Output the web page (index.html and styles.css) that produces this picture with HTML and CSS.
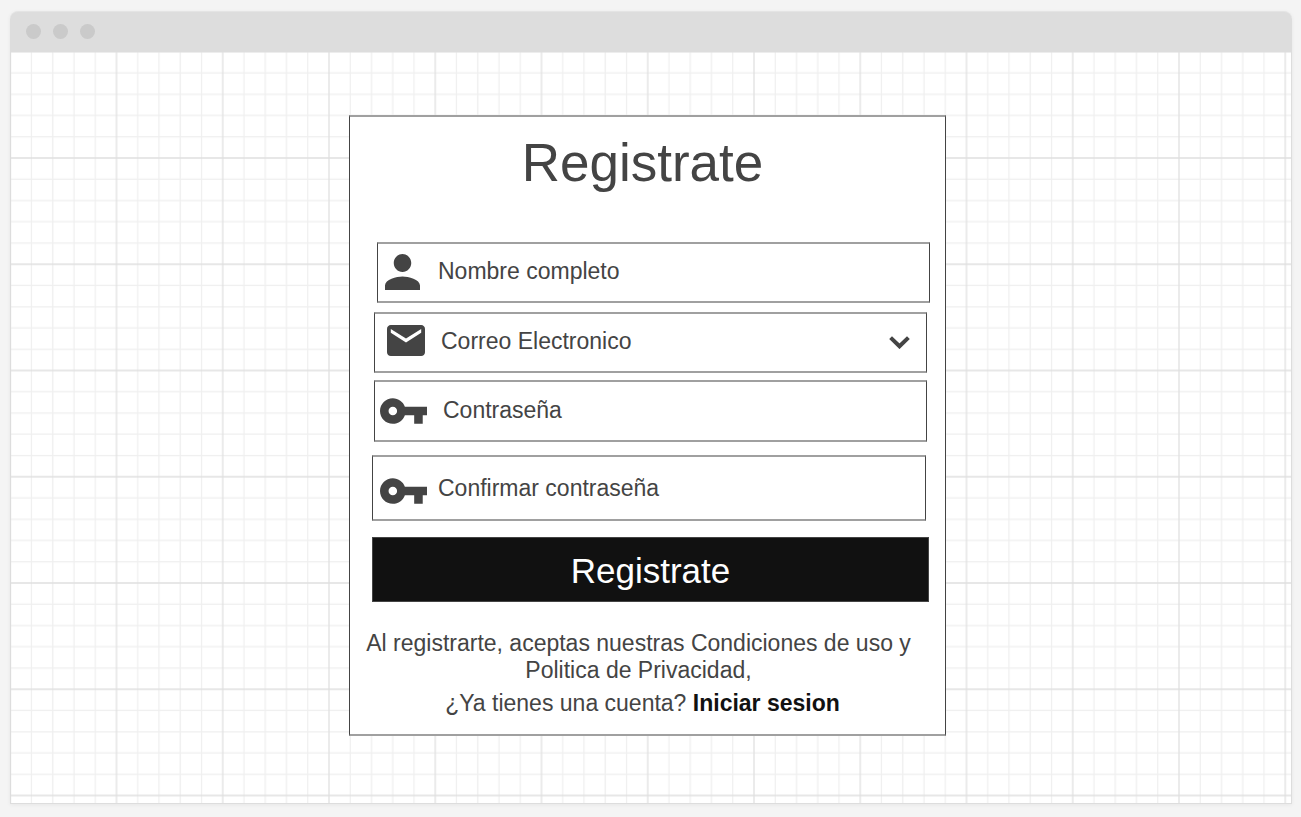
FILE: index.html
```html
<!DOCTYPE html>
<html lang="es">
<head>
<meta charset="utf-8">
<meta name="viewport" content="width=device-width, initial-scale=1">
<title>Registrate</title>
<link rel="stylesheet" href="styles.css">
</head>
<body>
<div class="window">
  <header class="titlebar">
    <span class="dot"></span>
    <span class="dot"></span>
    <span class="dot"></span>
  </header>
  <main class="canvas">
    <svg class="grid" aria-hidden="true">
      <defs>
        <pattern id="grid" width="425" height="425" patternUnits="userSpaceOnUse" patternTransform="translate(-0.75 -0.25) scale(0.25)">
          <path d="M85 0V425M170 0V425M255 0V425M340 0V425M0 85H425M0 170H425M0 255H425M0 340H425" stroke="#efefef" stroke-width="5"/>
          <path d="M0 0V425M425 0V425M0 0H425M0 425H425" stroke="#e0e0e0" stroke-width="5"/>
        </pattern>
      </defs>
      <rect width="100%" height="100%" fill="url(#grid)"/>
    </svg>
    <section class="card">
      <h1 class="title">Registrate</h1>
      <form class="form">
        <div class="field field-name">
          <label class="field-icon" for="name">
            <svg width="35" height="36" viewBox="4 4 16 16" preserveAspectRatio="none" aria-hidden="true"><path d="M12 12c2.21 0 4-1.79 4-4s-1.79-4-4-4-4 1.79-4 4 1.79 4 4 4zm0 2c-2.67 0-8 1.34-8 4v2h16v-2c0-2.66-5.33-4-8-4z"/></svg>
          </label>
          <input class="control" id="name" type="text" placeholder="Nombre completo" aria-label="Nombre completo">
        </div>
        <div class="field field-email">
          <label class="field-icon" for="email">
            <svg width="38" height="31" viewBox="2 4 20 16" preserveAspectRatio="none" aria-hidden="true"><path d="M20 4H4c-1.1 0-2 .9-2 2v12c0 1.1.9 2 2 2h16c1.1 0 2-.9 2-2V6c0-1.1-.9-2-2-2zm0 4l-8 5-8-5V6l8 5 8-5v2z"/></svg>
          </label>
          <select class="control" id="email" aria-label="Correo Electronico">
            <option>Correo Electronico</option>
          </select>
          <svg class="chevron" width="21" height="13" viewBox="0 0 21 13" aria-hidden="true"><path d="M1.6 1.6L10.5 10.3L19.4 1.6"/></svg>
        </div>
        <div class="field field-password">
          <label class="field-icon" for="password">
            <svg width="47" height="26" viewBox="1 6 22 12" aria-hidden="true"><path d="M12.65 10C11.83 7.67 9.61 6 7 6c-3.31 0-6 2.69-6 6s2.69 6 6 6c2.61 0 4.83-1.67 5.65-4H17v4h4v-4h2v-4H12.65zM7 14c-1.1 0-2-.9-2-2s.9-2 2-2 2 .9 2 2-.9 2-2 2z"/></svg>
          </label>
          <input class="control" id="password" type="password" placeholder="Contraseña" aria-label="Contraseña">
        </div>
        <div class="field field-confirm">
          <label class="field-icon" for="confirm">
            <svg width="47" height="26" viewBox="1 6 22 12" aria-hidden="true"><path d="M12.65 10C11.83 7.67 9.61 6 7 6c-3.31 0-6 2.69-6 6s2.69 6 6 6c2.61 0 4.83-1.67 5.65-4H17v4h4v-4h2v-4H12.65zM7 14c-1.1 0-2-.9-2-2s.9-2 2-2 2 .9 2 2-.9 2-2 2z"/></svg>
          </label>
          <input class="control" id="confirm" type="password" placeholder="Confirmar contraseña" aria-label="Confirmar contraseña">
        </div>
        <button class="submit" type="submit">Registrate</button>
      </form>
      <p class="terms">Al registrarte, aceptas nuestras Condiciones de uso y Politica de Privacidad,</p>
      <p class="login">¿Ya tienes una cuenta? <a class="login-link" href="#">Iniciar sesion</a></p>
    </section>
  </main>
</div>
</body>
</html>
```
FILE: styles.css
```css
* {
  box-sizing: border-box;
}

body {
  display: flex;
  min-height: 100vh;
  margin: 0;
  padding: 11px 9px 13px 10px;
  background: #f4f4f4;
  color: #444;
  font-family: "Liberation Sans", Arial, sans-serif;
  font-size: 23px;
  line-height: 27px;
}

.window {
  display: flex;
  flex: 1;
  flex-direction: column;
  min-width: 0;
  border-radius: 8px 8px 0 0;
  box-shadow: 0 1px 4px rgba(0, 0, 0, 0.06);
}

.titlebar {
  display: flex;
  align-items: center;
  gap: 12px;
  height: 41px;
  padding: 0 16px 2px;
  border-top: 1px solid #e4e4e4;
  border-radius: 8px 8px 0 0;
  background: #ddd;
}

.dot {
  width: 15px;
  height: 15px;
  border-radius: 50%;
  background: #cacaca;
}

.canvas {
  position: relative;
  display: flex;
  flex: 1;
  align-items: flex-start;
  justify-content: center;
  padding: 63px 7px 67px 0;
  border: 1px solid #ddd;
  border-top: 0;
  background: #fff;
}

.grid {
  position: absolute;
  inset: 0;
  width: 100%;
  height: 100%;
}

.card {
  position: relative;
  width: 100%;
  max-width: 597px;
  padding: 16px 0 17px;
  border: 1px solid #444;
  border-width: 2px 1px;
  border-color: #a0a0a0 #444;
  background: #fff;
}

.title {
  margin: 0;
  padding-right: 10px;
  font-size: 53px;
  font-weight: 400;
  line-height: 60px;
  text-align: center;
}

.form {
  display: flex;
  flex-direction: column;
  margin-top: 49px;
  padding: 0 15px 0 22px;
}

.field {
  display: flex;
  align-items: stretch;
  height: 61px;
  border: 1px solid #444;
  border-width: 2px 1px;
  border-color: #a0a0a0 #444;
}

.field-icon {
  display: flex;
  flex: none;
  align-items: center;
  fill: #444;
}

.control {
  flex: 1;
  min-width: 0;
  margin: 0;
  padding: 0 0 2px;
  border: 0;
  outline: 0;
  background: transparent;
  color: #444;
  font: inherit;
  appearance: none;
}

.control::placeholder {
  color: #444;
  opacity: 1;
}

.field-name {
  margin-left: 5px;
}

.field-name .field-icon {
  width: 60px;
  padding: 0 0 2px 7px;
}

.field-email {
  align-items: center;
  margin: 9px 3px 0 2px;
}

.field-email .field-icon {
  width: 66px;
  padding: 0 0 4px 12px;
}

.field-email .control {
  height: 100%;
}

.chevron {
  flex: none;
  margin-right: 16px;
  fill: none;
  stroke: #444;
  stroke-width: 4;
  pointer-events: none;
}

.field-password {
  height: 62px;
  margin: 7px 3px 0 2px;
}

.field-password .field-icon {
  width: 68px;
  padding-left: 5px;
}

.field-confirm {
  height: 66px;
  margin: 13px 4px 0 0;
}

.field-confirm .field-icon {
  width: 65px;
  padding: 6px 0 0 7px;
}

.field-confirm .control {
  padding: 0;
}

.submit {
  height: 65px;
  margin: 16px 1px 0 0;
  padding: 2px 0 0;
  border: 1px solid #444;
  background: #111;
  color: #fff;
  font: inherit;
  font-size: 35px;
}

.terms {
  margin: 28px 0 0;
  padding: 0 22px 0 4px;
  text-align: center;
}

.login {
  margin: 6px 0 0;
  padding-right: 10px;
  text-align: center;
}

.login-link {
  color: #111;
  font-weight: 700;
  text-decoration: none;
}
```
